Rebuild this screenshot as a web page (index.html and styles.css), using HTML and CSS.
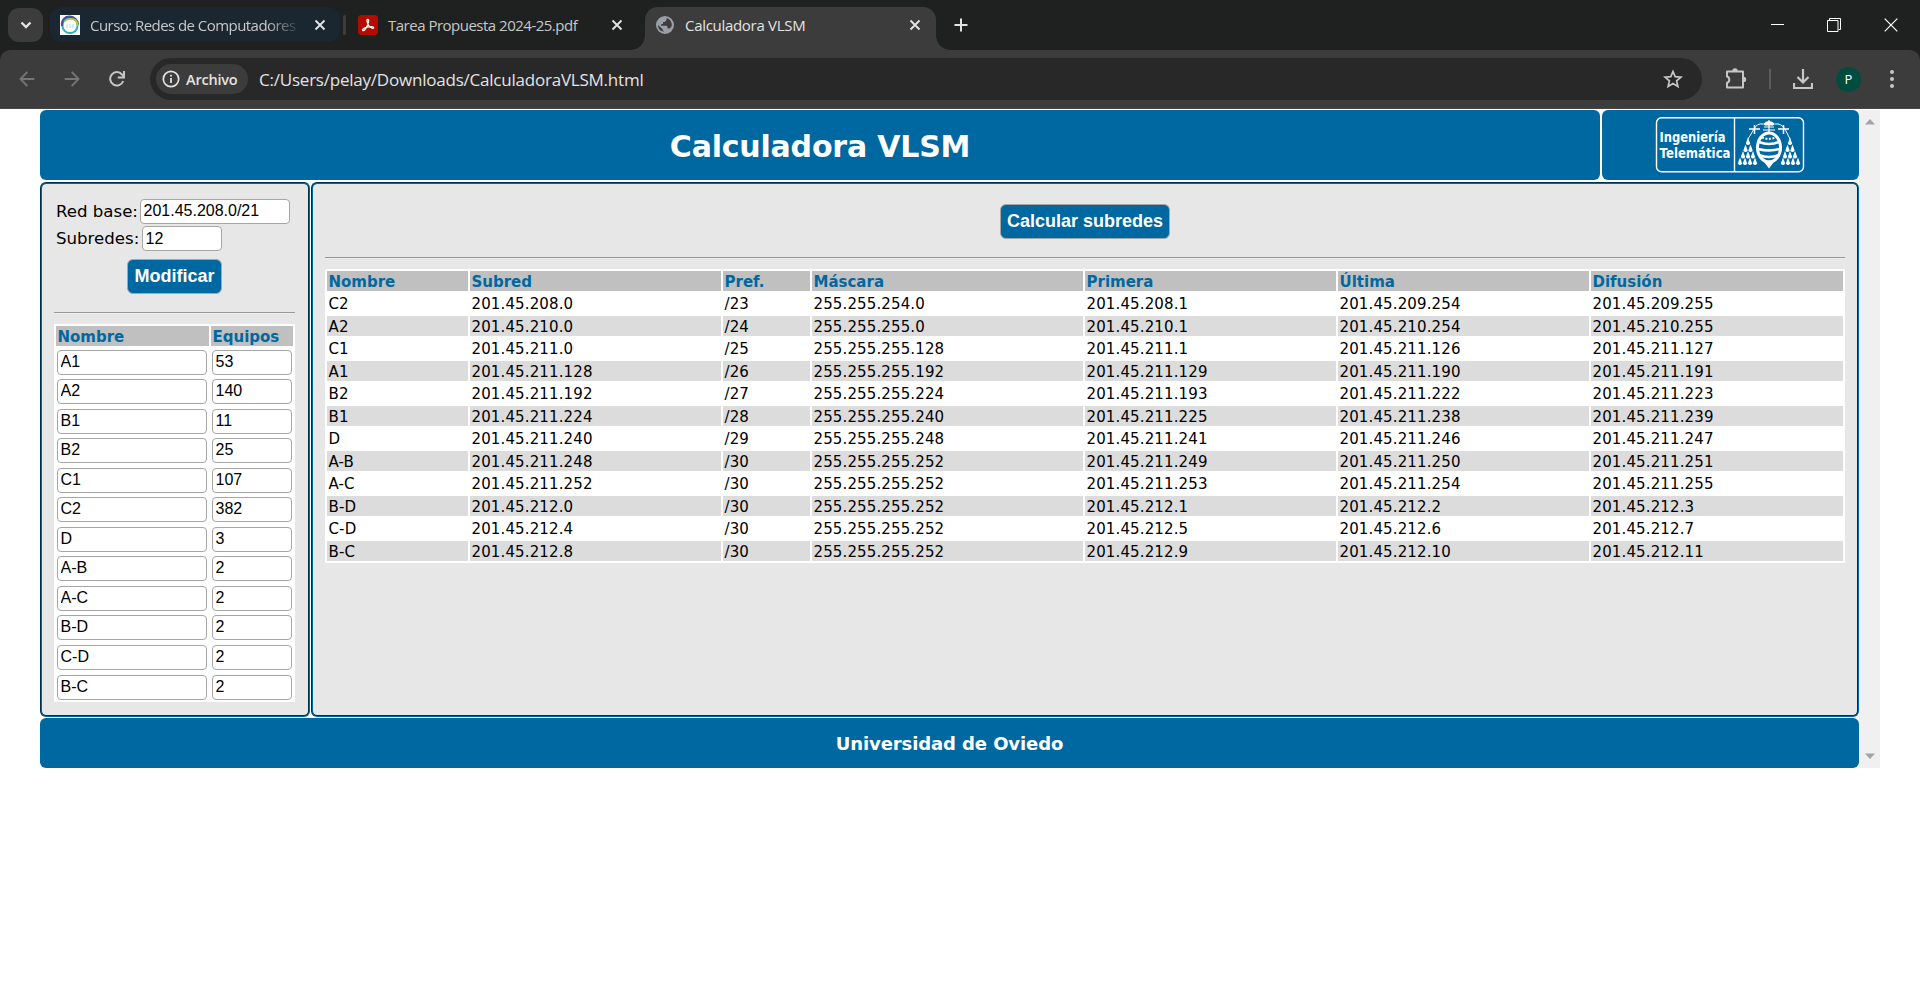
FILE: index.html
```html
<!DOCTYPE html>
<html lang="es">
<head>
<meta charset="utf-8">
<title>Calculadora VLSM</title>
<link rel="stylesheet" href="styles.css">
</head>
<body>
<div class="tabstrip">
  <div class="tabsearch"><svg width="35" height="34" viewBox="0 0 35 34"><path d="M13.5 14.5l4.5 4.5 4.5-4.5" fill="none" stroke="#e3e3e3" stroke-width="2.4"/></svg></div>
  <div class="tab tab-group">
    <svg class="fav" width="20" height="20" viewBox="0 0 20 20"><rect width="20" height="20" fill="#fff"/><circle cx="10" cy="10.5" r="7.6" fill="none" stroke="#35aeb8" stroke-width="2"/><path d="M2.200 11C1 4.500 6 1.300 10 1.600s8 3.400 8 8" fill="none" stroke="#4a4da8" stroke-width="2.200"/><path d="M4.500 6.500Q8 2.800 13 4.200T17.200 11" fill="none" stroke="#b5cc2e" stroke-width="1.800"/><path d="M6 10h8M6 12h8" stroke="#a8dfe2" stroke-dasharray="2 1"/></svg>
    <span class="tabname fade">Curso: Redes de Computadores</span>
    <svg class="close" width="12" height="12" viewBox="0 0 12 12"><path d="M1.500 1.500l9 9M10.500 1.500l-9 9" stroke="#e3e3e3" stroke-width="1.900"/></svg>
  </div>
  <div class="tabsep"></div>
  <div class="tab tab-pdf">
    <svg class="fav" width="20" height="20" viewBox="0 0 20 20"><rect width="20" height="20" rx="3.500" fill="#b30b00"/><path d="M9.700 4.300c1.600 0 .9 3.200-.4 6.100-1.200 2.700-3 5.600-4.300 5.200-1.500-.8 1-2.700 4.300-3.500 3-.8 6.400-.7 6.300.7-.3 1.600-3.400-.2-5-2.500-1.300-2-2.300-6-.9-6z" fill="none" stroke="#fff" stroke-width="1.300"/></svg>
    <span class="tabname tn-pdf">Tarea Propuesta 2024-25.pdf</span>
    <svg class="close" width="12" height="12" viewBox="0 0 12 12"><path d="M1.500 1.500l9 9M10.500 1.500l-9 9" stroke="#e3e3e3" stroke-width="1.900"/></svg>
  </div>
  <div class="tab tab-active">
    <svg class="fav" width="18" height="18" viewBox="0 0 18 18"><circle cx="9" cy="9" r="9" fill="#9aa0a6"/><path d="M10.500 2v2.200L8.700 6H7v2H5.200v1.800h5.300l1 1v1.700h2l1.900-1.700c.6-1.500.4-2.600.2-3.600-.6-2.400-2.400-4.500-5.100-5.200zM2 9l4.700 4.200v1.200l1.600 1.400c-3.800-.4-6.500-3-6.300-6.800z" fill="#3c3c3c"/></svg>
    <span class="tabname tn-calc">Calculadora VLSM</span>
    <svg class="close" width="12" height="12" viewBox="0 0 12 12"><path d="M1.500 1.500l9 9M10.500 1.500l-9 9" stroke="#e3e3e3" stroke-width="1.900"/></svg>
  </div>
  <svg class="newtab" width="14" height="14" viewBox="0 0 14 14"><path d="M7 .5v13M.5 7h13" stroke="#e3e3e3" stroke-width="2"/></svg>
  <div class="winbtns">
    <svg width="14" height="14" viewBox="0 0 14 14"><path d="M.5 6.500h13" stroke="#fff" shape-rendering="crispEdges"/></svg>
    <svg width="14" height="14" viewBox="0 0 14 14"><path d="M.5 2.500h10.500v11H.5zM2.500 2.500V.5h11v11h-2" fill="none" stroke="#fff"/></svg>
    <svg width="14" height="14" viewBox="0 0 14 14"><path d="M.7.700l12.600 12.600M13.300.700L.7 13.300" stroke="#fff" stroke-width="1.200"/></svg>
  </div>
</div>
<div class="toolbar">
  <svg class="nav" width="16" height="16" viewBox="0 0 16 16"><path d="M15.300 8H1.500M8.300 1L1.400 8l6.900 7" fill="none" stroke="#757575" stroke-width="1.800"/></svg>
  <svg class="nav" width="16" height="16" viewBox="0 0 16 16"><path d="M.7 8h13.800M7.700 1l6.900 7-6.900 7" fill="none" stroke="#757575" stroke-width="1.800"/></svg>
  <svg class="nav" width="16" height="16" viewBox="0 0 16 16"><path d="M14.200 10A6.700 6.700 0 1 1 13 3.500l1.500 2" fill="none" stroke="#c7c7c7" stroke-width="2"/><path d="M15 0v6.500H8.700" fill="none" stroke="#c7c7c7" stroke-width="2"/></svg>
  <div class="omnibox">
    <div class="chip"><svg width="18" height="18" viewBox="0 0 18 18"><circle cx="9" cy="9" r="7.700" fill="none" stroke="#e3e3e3" stroke-width="1.700"/><path d="M9 8v5M9 4.700v1.800" stroke="#e3e3e3" stroke-width="1.800"/></svg><span>Archivo</span></div>
    <span class="url">C:/Users/pelay/Downloads/CalculadoraVLSM.html</span>
    <svg class="star" width="20" height="20" viewBox="0 0 20 20"><path d="M10 2.500l2.200 5.200 5.700.5-4.300 3.700 1.300 5.500-4.900-2.900-4.900 2.900 1.300-5.500L2.100 8.200l5.700-.5z" fill="none" stroke="#c7c7c7" stroke-width="1.700"/></svg>
  </div>
  <svg class="ext" width="22" height="22" viewBox="0 0 22 22"><path d="M2 3.500h16v16H2v-4.700a3.300 3.300 0 0 0 0-6.300z" fill="none" stroke="#c7c7c7" stroke-width="2" stroke-linejoin="round"/><path d="M7.300 3a2.700 2.700 0 0 1 5.400 0zM18.500 8.800a2.700 2.700 0 0 1 0 5.400z" fill="#c7c7c7"/></svg>
  <div class="vsep"></div>
  <svg class="down" width="20" height="20" viewBox="0 0 20 20"><path d="M10 0v13M4.500 8l5.500 5.500L15.500 8M1 14v5h18v-5" fill="none" stroke="#c7c7c7" stroke-width="2.200"/></svg>
  <div class="avatar">P</div>
  <svg class="dots" width="4" height="18" viewBox="0 0 4 18"><g fill="#c7c7c7"><circle cx="2" cy="2" r="2"/><circle cx="2" cy="9" r="2"/><circle cx="2" cy="16" r="2"/></g></svg>
</div>
<div class="page">
  <div class="app">
    <div class="top">
      <div class="banner"><h1>Calculadora VLSM</h1></div>
      <div class="brand">
        <svg width="150" height="58" viewBox="0 0 150 58">
          <rect x="1.500" y="1.700" width="147" height="54" rx="5" fill="none" stroke="#fff" stroke-width="1.400"/>
          <path d="M79.500 2v53" stroke="#fff" stroke-width="1.400"/>
          <text class="brandtext" x="4.500" y="26" textLength="66" lengthAdjust="spacingAndGlyphs">Ingeniería</text>
          <text class="brandtext" x="4.500" y="42" textLength="71" lengthAdjust="spacingAndGlyphs">Telemática</text>
          <g transform="translate(1 0)">
          <g fill="none" stroke="#fff">
            <path d="M107 8Q101 7 98 13l-6 10M119 8q6-1 10 5l5 10" stroke-width="1"/>
            <path d="M93 13h11M98.500 9v9M122 13h11M127.500 9v9" stroke-width="1.500"/>
            <path d="M108 11h10M107 14h12M113 4v13" stroke-width="1.200"/>
            <ellipse cx="113" cy="31.500" rx="11.500" ry="14.500" stroke-width="3"/>
            <path d="M103 26q10 4 20 0M102 33q11 3 22 0M103 39q10 4 20 0" stroke-width="2.600"/>
            <path d="M106 21.500q7 2.500 14 0" stroke-width="2" stroke-dasharray="2 1.500"/>
          </g>
          <path d="M107 8q6-6 12 0l-2 1.500h-8z" fill="#fff"/>
          <path d="M107 44.500h12l-3 4-3 4-3-4z" fill="#fff"/>
          <g fill="#fff">
            <path id="tassel" d="M92 21.500l2.200 6q-2.200 3.200-4.400 0z"/><use href="#tassel" x="-2.500" y="7"/><use href="#tassel" x="2.500" y="7"/><use href="#tassel" x="-5" y="13.500"/><use href="#tassel" y="13.500"/><use href="#tassel" x="5" y="13.500"/><use href="#tassel" x="-8" y="20"/><use href="#tassel" x="-3" y="20"/><use href="#tassel" x="2" y="20"/><use href="#tassel" x="7" y="20"/>
            <use href="#tassel" x="42"/><use href="#tassel" x="39.500" y="7"/><use href="#tassel" x="44.500" y="7"/><use href="#tassel" x="37" y="13.500"/><use href="#tassel" x="42" y="13.500"/><use href="#tassel" x="47" y="13.500"/><use href="#tassel" x="35" y="20"/><use href="#tassel" x="40" y="20"/><use href="#tassel" x="45" y="20"/><use href="#tassel" x="50" y="20"/>
          </g>
          </g>
        </svg>
      </div>
    </div>
    <div class="panels">
      <div class="panel side">
        <div class="field"><label>Red base:</label><input class="wide" value="201.45.208.0/21"></div>
        <div class="field second"><label>Subredes:</label><input class="short" value="12"></div>
        <button class="btn modify">Modificar</button>
        <hr class="rule">
        <div class="hosts" id="hosts"><div class="th">Nombre</div><div class="th">Equipos</div></div>
      </div>
      <div class="panel main">
        <button class="btn calc">Calcular subredes</button>
        <hr class="rule">
        <div class="result" id="result"></div>
      </div>
    </div>
    <div class="foot">Universidad de Oviedo</div>
  </div>
  <div class="scroll"><svg width="10" height="6" viewBox="0 0 10 6"><path d="M0 5.500L5 0l5 5.500z" fill="#a3a3a3"/></svg><svg width="10" height="6" viewBox="0 0 10 6"><path d="M0 .5L5 6l5-5.500z" fill="#a3a3a3"/></svg></div>
</div>
<script src="app.js"></script>
</body>
</html>
```
FILE: styles.css
```css
* { box-sizing: border-box; }
body { margin: 0; background: #fff; font-family: Verdana, "DejaVu Sans", sans-serif; color: #000; overflow: hidden; }
svg { display: block; flex: none; }
.tabstrip { height: 50px; background: #1f2120; display: flex; align-items: flex-start; padding: 7px 0 0 8px; font-family: "Segoe UI", "Open Sans", sans-serif; position: relative; z-index: 1; }
.tabsearch { width: 35px; height: 34px; margin-top: 1px; border-radius: 11px; background: #3c3c3c; }
.tab { display: flex; align-items: center; height: 35px; }
.tab-group { width: 290px; margin-left: 7px; background: #1a2730; border-radius: 12px; padding: 0 14px 0 10px; }
.tabname { font-size: 15px; line-height: 20px; color: #c7c7c7; white-space: nowrap; margin-left: 10px; flex: 1; letter-spacing: -0.3px; }
.tab-group .tabname { margin-right: 14px; letter-spacing: -0.55px; }
.tn-pdf { letter-spacing: -0.5px; }
.fade { -webkit-mask-image: linear-gradient(90deg, #000 84%, transparent 101%); mask-image: linear-gradient(90deg, #000 84%, transparent 101%); }
.tabsep { width: 3px; height: 20px; background: #3c3c3c; border-radius: 2px; margin: 8px 0 0 3px; }
.tab-pdf { width: 265px; margin-left: 12px; }
.tab-active { width: 291px; height: 43px; margin-left: 22px; padding: 0 15px 8px 11px; background: #3c3c3c; border-radius: 13px 13px 0 0; position: relative; }
.tab-active::before, .tab-active::after { content: ""; position: absolute; bottom: 0; width: 14px; height: 14px; }
.tab-active::before { left: -14px; background: radial-gradient(circle at 0 0, transparent 13.5px, #3c3c3c 14px); }
.tab-active::after { right: -14px; background: radial-gradient(circle at 100% 0, transparent 13.5px, #3c3c3c 14px); }
.tab-active .tabname { color: #e3e3e3; margin-left: 11px; }
.newtab { margin: 11px 0 0 18px; }
.winbtns { display: flex; gap: 43px; margin: 11px 22px 0 auto; }
.toolbar { height: 59px; background: #3c3c3c; border-radius: 10px 10px 0 0; border-bottom: 1px solid #4a4548; display: flex; align-items: center; padding: 0 26px 0 19px; box-shadow: 0 -10px 0 #1f2120; font-family: "Segoe UI", "Open Sans", sans-serif; clip-path: inset(-10px 0 0 0); }
.nav { margin-right: 29px; }
.omnibox { width: 1552px; height: 42px; border-radius: 21px; background: #282828; display: flex; align-items: center; padding: 0 19px 0 6px; margin-left: -4px; }
.chip { width: 92px; height: 30px; border-radius: 15px; background: #3c3c3c; display: flex; align-items: center; padding-left: 6px; font-weight: 600; font-size: 14.5px; color: #e3e3e3; }
.chip span { margin-left: 6px; letter-spacing: -0.2px; }
.url { font-size: 17px; color: #e3e3e3; margin-left: 11px; flex: 1; white-space: nowrap; letter-spacing: -0.22px; }
.ext { margin-left: 23px; }
.vsep { width: 2px; height: 20px; background: #5c5c5c; margin-left: 22px; }
.down { margin-left: 22px; }
.avatar { width: 25px; height: 25px; border-radius: 50%; background: #004d40; color: #fff; font-size: 13px; line-height: 24px; text-align: center; margin-left: 23px; flex: none; }
.dots { margin-left: auto; }

.page { display: flex; padding: 1px 0 0 40px; }
.app { width: 1819px; }
.top { display: flex; gap: 2px; height: 70px; }
.banner { width: 1560px; background: #0068a1; border-radius: 6px; display: flex; align-items: center; justify-content: center; padding-top: 3px; }
.banner h1 { margin: 0; font-size: 30px; line-height: 36px; color: #fff; letter-spacing: -0.2px; }
.brand { width: 257px; background: #0068a1; border-radius: 6px; padding: 6px 0 0 53px; }
.brandtext { font: bold 13.5px Verdana, "DejaVu Sans", sans-serif; fill: #fff; }
.panels { display: flex; gap: 1px; margin-top: 2px; height: 535px; }
.panel { border: 2px groove #0068a1; border-radius: 6px; background: #e7e7e7; }
.side { width: 270px; padding: 15px 13px 0 12px; display: flex; flex-direction: column; }
.main { width: 1548px; padding: 20px 12px 0; display: flex; flex-direction: column; }
.field { display: flex; align-items: center; height: 25px; padding-left: 2px; font-size: 16.6px; }
.second { margin-top: 2px; }
input { height: 25px; border: 1px solid #a6a6a6; border-radius: 4px; background: #fff; padding: 0 2px 1px 2.5px; font: 16px Arial, "Liberation Sans", sans-serif; color: #000; }
.wide { width: 150px; }
.short { width: 80px; }
.field input { margin-left: auto; margin-right: 5px; padding-bottom: 2px; }
.second label { width: 86px; }
.second input { margin-left: 0; padding-bottom: 0; }
.btn { border: 1px solid #a6a6a6; border-radius: 6px; background: #0068a1; color: #fff; font: bold 18px Arial, "Liberation Sans", sans-serif; height: 35px; padding: 0 0 1px; align-self: center; }
.modify { width: 95px; margin-top: 8px; }
.calc { width: 170px; }
.rule { width: 100%; height: 2px; border: 0; border-top: 1px solid #999; border-bottom: 1px solid #ededed; margin: 18px 0 10px; flex: none; }
.hosts { background: #fff; height: 378px; padding: 2px; display: grid; grid-template-columns: 153px 82px; grid-template-rows: 20px; grid-auto-rows: 27.05px; gap: 2.5px 2px; font-size: 15px; flex: none; }
.hosts input { margin: 1px 0 0 1px; }
.side .wide, .side .short { flex: none; }
.th { background: silver; color: #0068a1; font-weight: bold; line-height: 22px; padding-left: 1.5px; font-size: 15px; }
.result { background: #fff; height: 294px; padding: 2px; display: grid; grid-template-columns: 141px 251px 87px 271px 251px 251px 252px; grid-auto-rows: 20px; gap: 2.5px 2px; font-size: 15px; flex: none; }
.td { line-height: 20px; padding-left: 1.5px; letter-spacing: 0.13px; white-space: nowrap; }
.odd { background: #dcdcdc; line-height: 22px; }
.foot { height: 50px; margin-top: 1px; background: #0068a1; border-radius: 6px; color: #fff; font-weight: bold; font-size: 18px; line-height: 52px; text-align: center; letter-spacing: -0.1px; }
.scroll { width: 21px; height: 658px; background: #f0f0f0; display: flex; flex-direction: column; justify-content: space-between; align-items: center; padding: 9px 0; }
```
FILE: app.js
```js
const hosts = [["A1", 53], ["A2", 140], ["B1", 11], ["B2", 25], ["C1", 107], ["C2", 382], ["D", 3], ["A-B", 2], ["A-C", 2], ["B-D", 2], ["C-D", 2], ["B-C", 2]];
const rows = [
  ["C2", "208.0", 23, "254.0", "208.1", "209.254", "209.255"],
  ["A2", "210.0", 24, "255.0", "210.1", "210.254", "210.255"],
  ["C1", "211.0", 25, "255.128", "211.1", "211.126", "211.127"],
  ["A1", "211.128", 26, "255.192", "211.129", "211.190", "211.191"],
  ["B2", "211.192", 27, "255.224", "211.193", "211.222", "211.223"],
  ["B1", "211.224", 28, "255.240", "211.225", "211.238", "211.239"],
  ["D", "211.240", 29, "255.248", "211.241", "211.246", "211.247"],
  ["A-B", "211.248", 30, "255.252", "211.249", "211.250", "211.251"],
  ["A-C", "211.252", 30, "255.252", "211.253", "211.254", "211.255"],
  ["B-D", "212.0", 30, "255.252", "212.1", "212.2", "212.3"],
  ["C-D", "212.4", 30, "255.252", "212.5", "212.6", "212.7"],
  ["B-C", "212.8", 30, "255.252", "212.9", "212.10", "212.11"]
];
const cell = (cls, text) => `<div class="${cls}">${text}</div>`;
document.getElementById("hosts").insertAdjacentHTML("beforeend",
  hosts.map(([n, e]) => `<input class="wide" value="${n}"><input class="short" value="${e}">`).join(""));
const prefix = ["", "201.45.", "/", "255.255.", "201.45.", "201.45.", "201.45."];
document.getElementById("result").innerHTML =
  ["Nombre", "Subred", "Pref.", "Máscara", "Primera", "Última", "Difusión"].map(t => cell("th", t)).join("") +
  rows.map((r, i) => r.map((v, c) => cell(i % 2 ? "td odd" : "td", prefix[c] + v)).join("")).join("");
```
